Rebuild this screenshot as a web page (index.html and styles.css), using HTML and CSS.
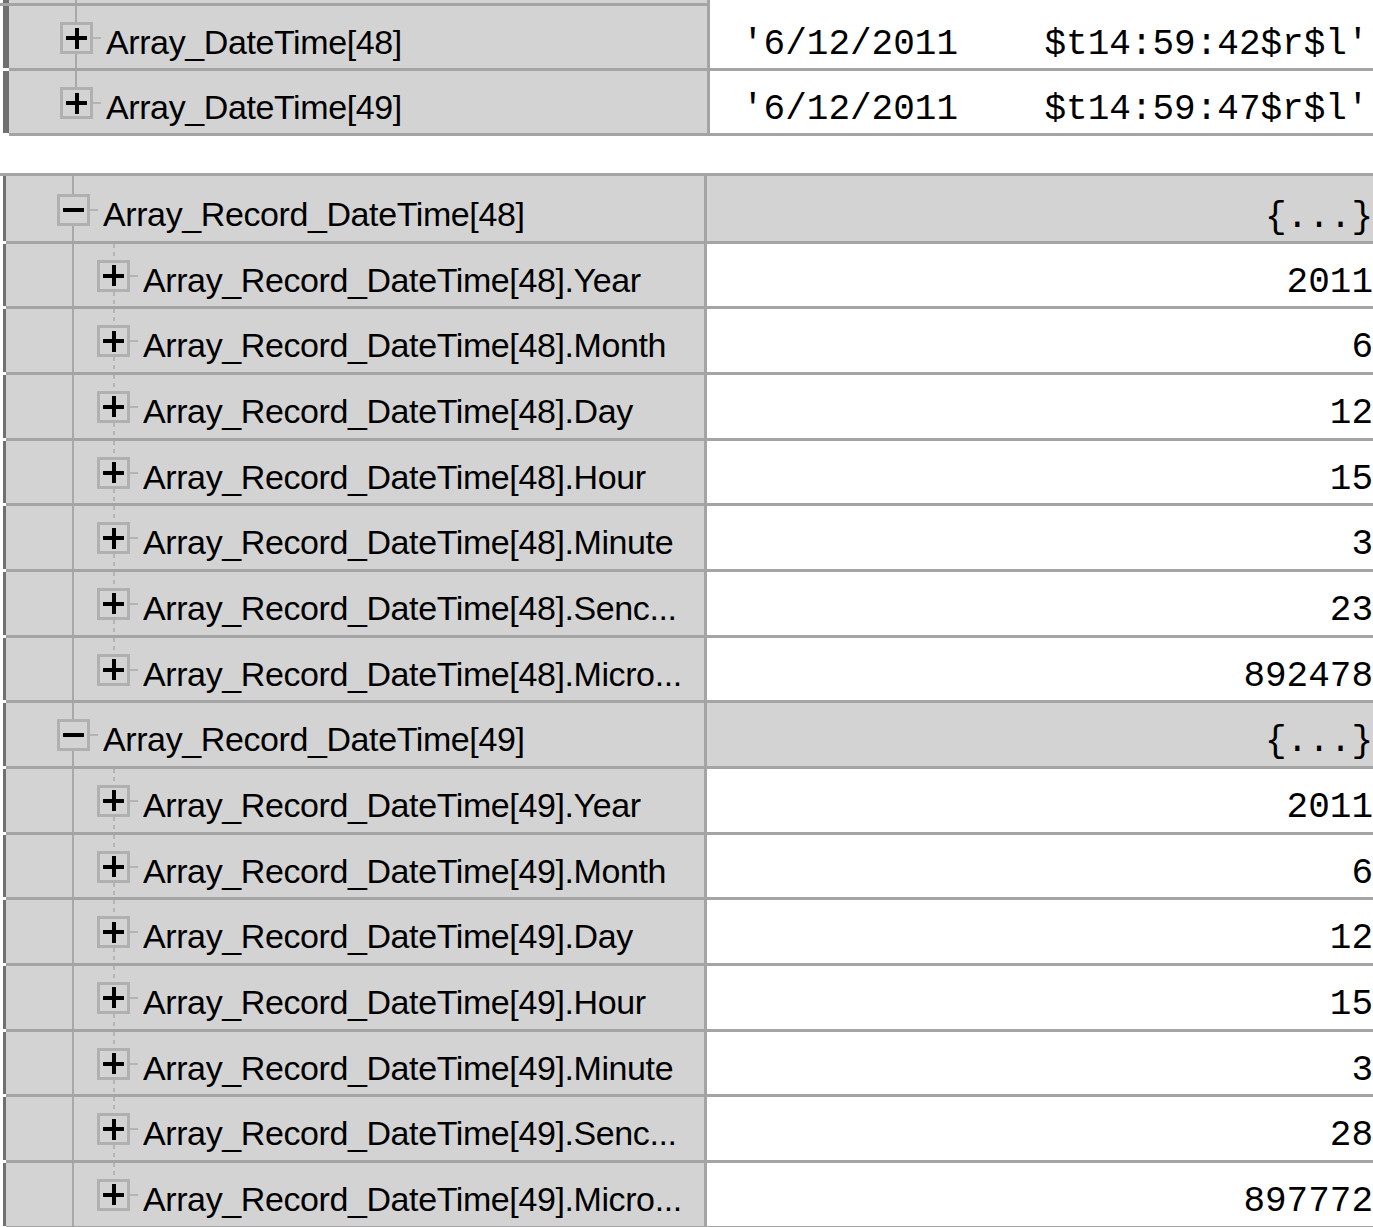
FILE: index.html
```html
<!DOCTYPE html>
<html>
<head>
<meta charset="utf-8">
<link rel="stylesheet" href="styles.css">
</head>
<body>
<div class="panel p1">
  <div class="stub"><div class="edge"></div><div class="lb"></div><div class="name t1"></div><div class="val"></div></div>
  <div class="row"><div class="edge"></div><div class="lb"></div><div class="name l1 t1"><span class="tog plus"></span><span class="dash"></span><span class="txt">Array_DateTime[48]</span></div><div class="val str">'6/12/2011    $t14:59:42$r$l'</div></div>
  <div class="row"><div class="edge"></div><div class="lb"></div><div class="name l1 t1e"><span class="tog plus"></span><span class="dash"></span><span class="txt">Array_DateTime[49]</span></div><div class="val str">'6/12/2011    $t14:59:47$r$l'</div></div>
</div>
<div class="panel p2">
  <div class="row first"><div class="edge"></div><div class="lb"></div><div class="name l1 t1 grp"><span class="tog minus"></span><span class="dash"></span><span class="txt">Array_Record_DateTime[48]</span></div><div class="val num grp">{...}</div></div>
  <div class="row"><div class="edge"></div><div class="lb"></div><div class="name l2 t12"><span class="tog plus"></span><span class="dash"></span><span class="txt">Array_Record_DateTime[48].Year</span></div><div class="val num">2011</div></div>
  <div class="row"><div class="edge"></div><div class="lb"></div><div class="name l2 t12"><span class="tog plus"></span><span class="dash"></span><span class="txt">Array_Record_DateTime[48].Month</span></div><div class="val num">6</div></div>
  <div class="row"><div class="edge"></div><div class="lb"></div><div class="name l2 t12"><span class="tog plus"></span><span class="dash"></span><span class="txt">Array_Record_DateTime[48].Day</span></div><div class="val num">12</div></div>
  <div class="row"><div class="edge"></div><div class="lb"></div><div class="name l2 t12"><span class="tog plus"></span><span class="dash"></span><span class="txt">Array_Record_DateTime[48].Hour</span></div><div class="val num">15</div></div>
  <div class="row"><div class="edge"></div><div class="lb"></div><div class="name l2 t12"><span class="tog plus"></span><span class="dash"></span><span class="txt">Array_Record_DateTime[48].Minute</span></div><div class="val num">3</div></div>
  <div class="row"><div class="edge"></div><div class="lb"></div><div class="name l2 t12"><span class="tog plus"></span><span class="dash"></span><span class="txt">Array_Record_DateTime[48].Senc...</span></div><div class="val num">23</div></div>
  <div class="row"><div class="edge"></div><div class="lb"></div><div class="name l2 t12e"><span class="tog plus"></span><span class="dash"></span><span class="txt">Array_Record_DateTime[48].Micro...</span></div><div class="val num">892478</div></div>
  <div class="row"><div class="edge"></div><div class="lb"></div><div class="name l1 t1 grp"><span class="tog minus"></span><span class="dash"></span><span class="txt">Array_Record_DateTime[49]</span></div><div class="val num grp">{...}</div></div>
  <div class="row"><div class="edge"></div><div class="lb"></div><div class="name l2 t12"><span class="tog plus"></span><span class="dash"></span><span class="txt">Array_Record_DateTime[49].Year</span></div><div class="val num">2011</div></div>
  <div class="row"><div class="edge"></div><div class="lb"></div><div class="name l2 t12"><span class="tog plus"></span><span class="dash"></span><span class="txt">Array_Record_DateTime[49].Month</span></div><div class="val num">6</div></div>
  <div class="row"><div class="edge"></div><div class="lb"></div><div class="name l2 t12"><span class="tog plus"></span><span class="dash"></span><span class="txt">Array_Record_DateTime[49].Day</span></div><div class="val num">12</div></div>
  <div class="row"><div class="edge"></div><div class="lb"></div><div class="name l2 t12"><span class="tog plus"></span><span class="dash"></span><span class="txt">Array_Record_DateTime[49].Hour</span></div><div class="val num">15</div></div>
  <div class="row"><div class="edge"></div><div class="lb"></div><div class="name l2 t12"><span class="tog plus"></span><span class="dash"></span><span class="txt">Array_Record_DateTime[49].Minute</span></div><div class="val num">3</div></div>
  <div class="row"><div class="edge"></div><div class="lb"></div><div class="name l2 t12"><span class="tog plus"></span><span class="dash"></span><span class="txt">Array_Record_DateTime[49].Senc...</span></div><div class="val num">28</div></div>
  <div class="row"><div class="edge"></div><div class="lb"></div><div class="name l2 t12e"><span class="tog plus"></span><span class="dash"></span><span class="txt">Array_Record_DateTime[49].Micro...</span></div><div class="val num">897772</div></div>
</div>
</body>
</html>
```
FILE: styles.css
```css
html, body {
  margin: 0;
  padding: 0;
  background: #ffffff;
  overflow: hidden;
}

.panel {
  width: 1373px;
  display: flex;
  flex-direction: column;
}

.p2 {
  margin-top: 37px;
  border-top: 3px solid #a4a4a4;
}

.stub, .row {
  display: flex;
  flex-shrink: 0;
}

.stub {
  height: 3px;
  border-bottom: 3px solid #a4a4a4;
}

.stub .name, .stub .val {
  border-bottom: none;
}

.row {
  height: 65px;
}

.p2 .row {
  height: 65.67px;
}

.p2 .row.first {
  height: 67.67px;
}

.p2 .row.first .name {
  padding-top: 2px;
}

.p2 .row.first .val {
  padding-top: 22px;
}

.edge {
  width: 3px;
  flex-shrink: 0;
  background: #ffffff;
}

.lb {
  flex-shrink: 0;
  background: #707070;
  margin-bottom: 3px;
}

.p1 .lb {
  width: 6px;
}

.p2 .lb {
  width: 3px;
}

.stub .lb {
  margin-bottom: 0;
}

.name {
  box-sizing: border-box;
  width: 701px;
  flex-shrink: 0;
  display: flex;
  align-items: flex-start;
  background-color: #d3d3d3;
  background-repeat: no-repeat;
  border-right: 3px solid #a4a4a4;
  border-bottom: 3px solid #a4a4a4;
  font-family: "Liberation Sans", Arial, sans-serif;
  font-size: 34px;
  letter-spacing: -0.4px;
  color: #000000;
  white-space: nowrap;
  overflow: hidden;
}

.l1 {
  padding-left: 51px;
}

.l2 {
  padding-left: 91px;
}

/* tree connector lines */
.t1 {
  background-image: linear-gradient(#a8a8a8, #a8a8a8);
  background-position: 66px 0;
  background-size: 2px 100%;
}

.t1e {
  background-image: linear-gradient(#a8a8a8, #a8a8a8);
  background-position: 66px 0;
  background-size: 2px 32px;
}

.t12 {
  background-image:
    linear-gradient(#a8a8a8, #a8a8a8),
    repeating-linear-gradient(#b4b4b4 0 4px, transparent 4px 8px);
  background-position: 66px 0, 107px 0;
  background-size: 2px 100%, 2px 100%;
}

.t12e {
  background-image:
    linear-gradient(#a8a8a8, #a8a8a8),
    repeating-linear-gradient(#b4b4b4 0 4px, transparent 4px 8px);
  background-position: 66px 0, 107px 0;
  background-size: 2px 100%, 2px 33px;
}

.tog {
  box-sizing: border-box;
  flex-shrink: 0;
  width: 33px;
  height: 32px;
  margin-top: 16px;
  border: 3px solid #b0b0b0;
  background-color: #d3d3d3;
  background-repeat: no-repeat;
  background-position: center;
}

.plus {
  background-image: linear-gradient(#000, #000), linear-gradient(#000, #000);
  background-size: 21px 4px, 4px 21px;
}

.minus {
  background-image: linear-gradient(#000, #000);
  background-size: 21px 4px;
}

.dash {
  flex-shrink: 0;
  width: 8px;
  height: 2px;
  margin-top: 31px;
  margin-right: 5px;
  background: #b4b4b4;
}

.txt {
  line-height: 38px;
  margin-top: 17px;
}

.val {
  box-sizing: border-box;
  flex: 1;
  background: #ffffff;
  border-bottom: 3px solid #a4a4a4;
  font-family: "Liberation Mono", "Courier New", monospace;
  font-size: 36px;
  line-height: 40px;
  padding-top: 19px;
  color: #000000;
  white-space: pre;
  overflow: hidden;
}

.val.str {
  padding-left: 32px;
}

.val.num {
  text-align: right;
  padding-right: 0;
}

.val.grp {
  background: #d3d3d3;
}
```
